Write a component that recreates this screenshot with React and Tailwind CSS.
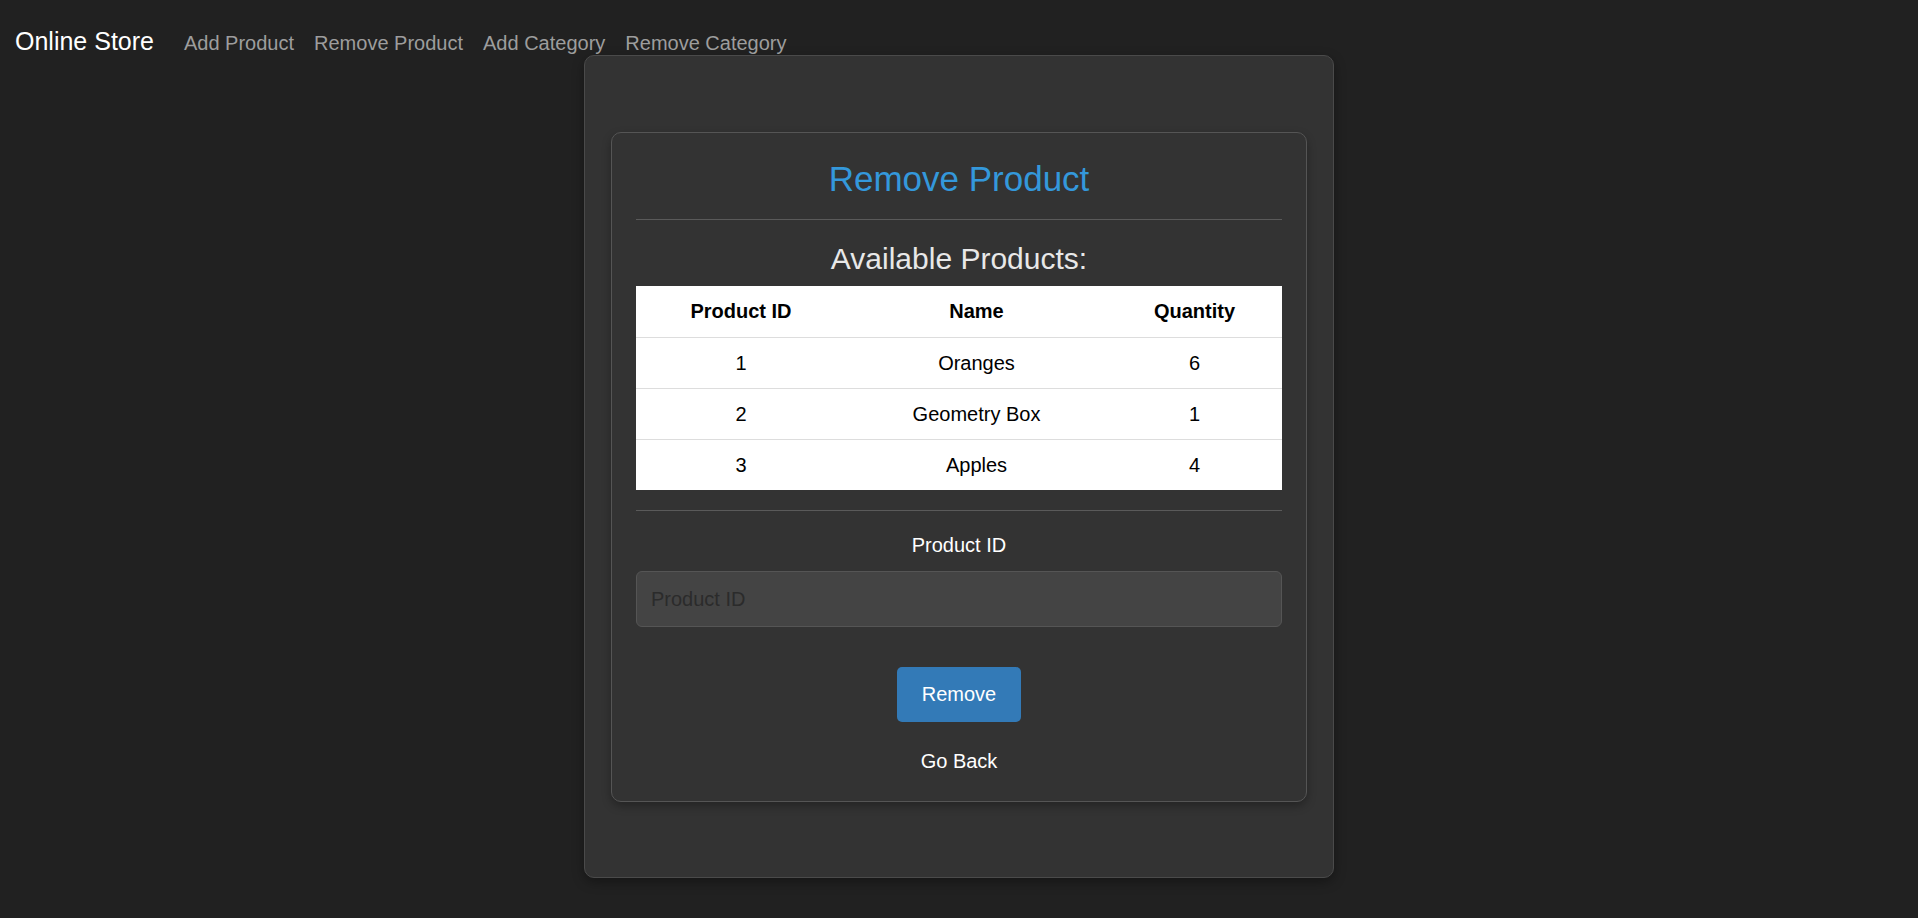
import React, { useState } from 'react'

const products = [
  { id: 1, name: 'Oranges', qty: 6 },
  { id: 2, name: 'Geometry Box', qty: 1 },
  { id: 3, name: 'Apples', qty: 4 },
]

function NavBar() {
  return (
    <nav className="relative z-10 h-[55px] pl-[15px] pt-[27px] flex items-baseline">
      <a href="#" className="text-[25px] leading-[29px] text-white mr-[30px]">Online Store</a>
      <div className="flex items-baseline gap-[20px] text-[20px] leading-[23px] text-[#9d9d9d]">
        <a href="#">Add Product</a>
        <a href="#">Remove Product</a>
        <a href="#">Add Category</a>
        <a href="#">Remove Category</a>
      </div>
    </nav>
  )
}

export default function App() {
  const [productId, setProductId] = useState('')

  return (
    <div className="min-h-screen bg-[#212121] font-['Liberation_Sans',Arial,sans-serif]">
      <NavBar />

      {/* Outer panel */}
      <div className="mx-auto w-[750px] rounded-[10px] border border-[#4a4a4a] bg-[#333333] px-[26px] pt-[76px] pb-[75px] shadow-[0_4px_12px_rgba(0,0,0,0.35)]">
        {/* Form card */}
        <div className="rounded-[10px] border border-[#555555] bg-[#333333] px-[24px] pt-[26px] pb-[28px] text-center shadow-[0_4px_10px_rgba(0,0,0,0.3)]">
          <h2 className="text-[35px] leading-[40px] text-[#3498db]">Remove Product</h2>
          <hr className="mt-[20px] border-0 border-t border-[#5a5a5a]" />

          <h3 className="mt-[22px] text-[30px] leading-[34px] text-[#e8e8e8]">Available Products:</h3>
          <table className="mt-[10px] w-full table-fixed bg-white text-black text-[20px]">
            <colgroup>
              <col className="w-[210px]" />
              <col className="w-[261px]" />
              <col />
            </colgroup>
            <thead>
              <tr className="h-[51px] border-b border-[#dddddd]">
                <th className="font-bold">Product ID</th>
                <th className="font-bold">Name</th>
                <th className="font-bold">Quantity</th>
              </tr>
            </thead>
            <tbody>
              {products.map((p, i) => (
                <tr key={p.id} className={`h-[51px] ${i < products.length - 1 ? 'border-b border-[#dddddd]' : ''}`}>
                  <td>{p.id}</td>
                  <td>{p.name}</td>
                  <td>{p.qty}</td>
                </tr>
              ))}
            </tbody>
          </table>

          <hr className="mt-[20px] border-0 border-t border-[#5a5a5a]" />

          <label htmlFor="pid" className="mt-[23px] block text-[20px] leading-[23px] text-white">Product ID</label>
          <input
            id="pid"
            value={productId}
            onChange={e => setProductId(e.target.value)}
            placeholder="Product ID"
            className="mt-[14px] block h-[56px] w-full rounded-[6px] border border-[#555555] bg-[#444444] px-[14px] text-[20px] text-white placeholder:text-[#2b2b2b] outline-none"
          />

          <button className="mt-[40px] h-[55px] rounded-[5px] bg-[#337ab7] px-[25px] text-[20px] leading-[23px] text-white">
            Remove
          </button>

          <a href="#" className="mt-[28px] block text-[20px] leading-[23px] text-white">Go Back</a>
        </div>
      </div>
    </div>
  )
}
